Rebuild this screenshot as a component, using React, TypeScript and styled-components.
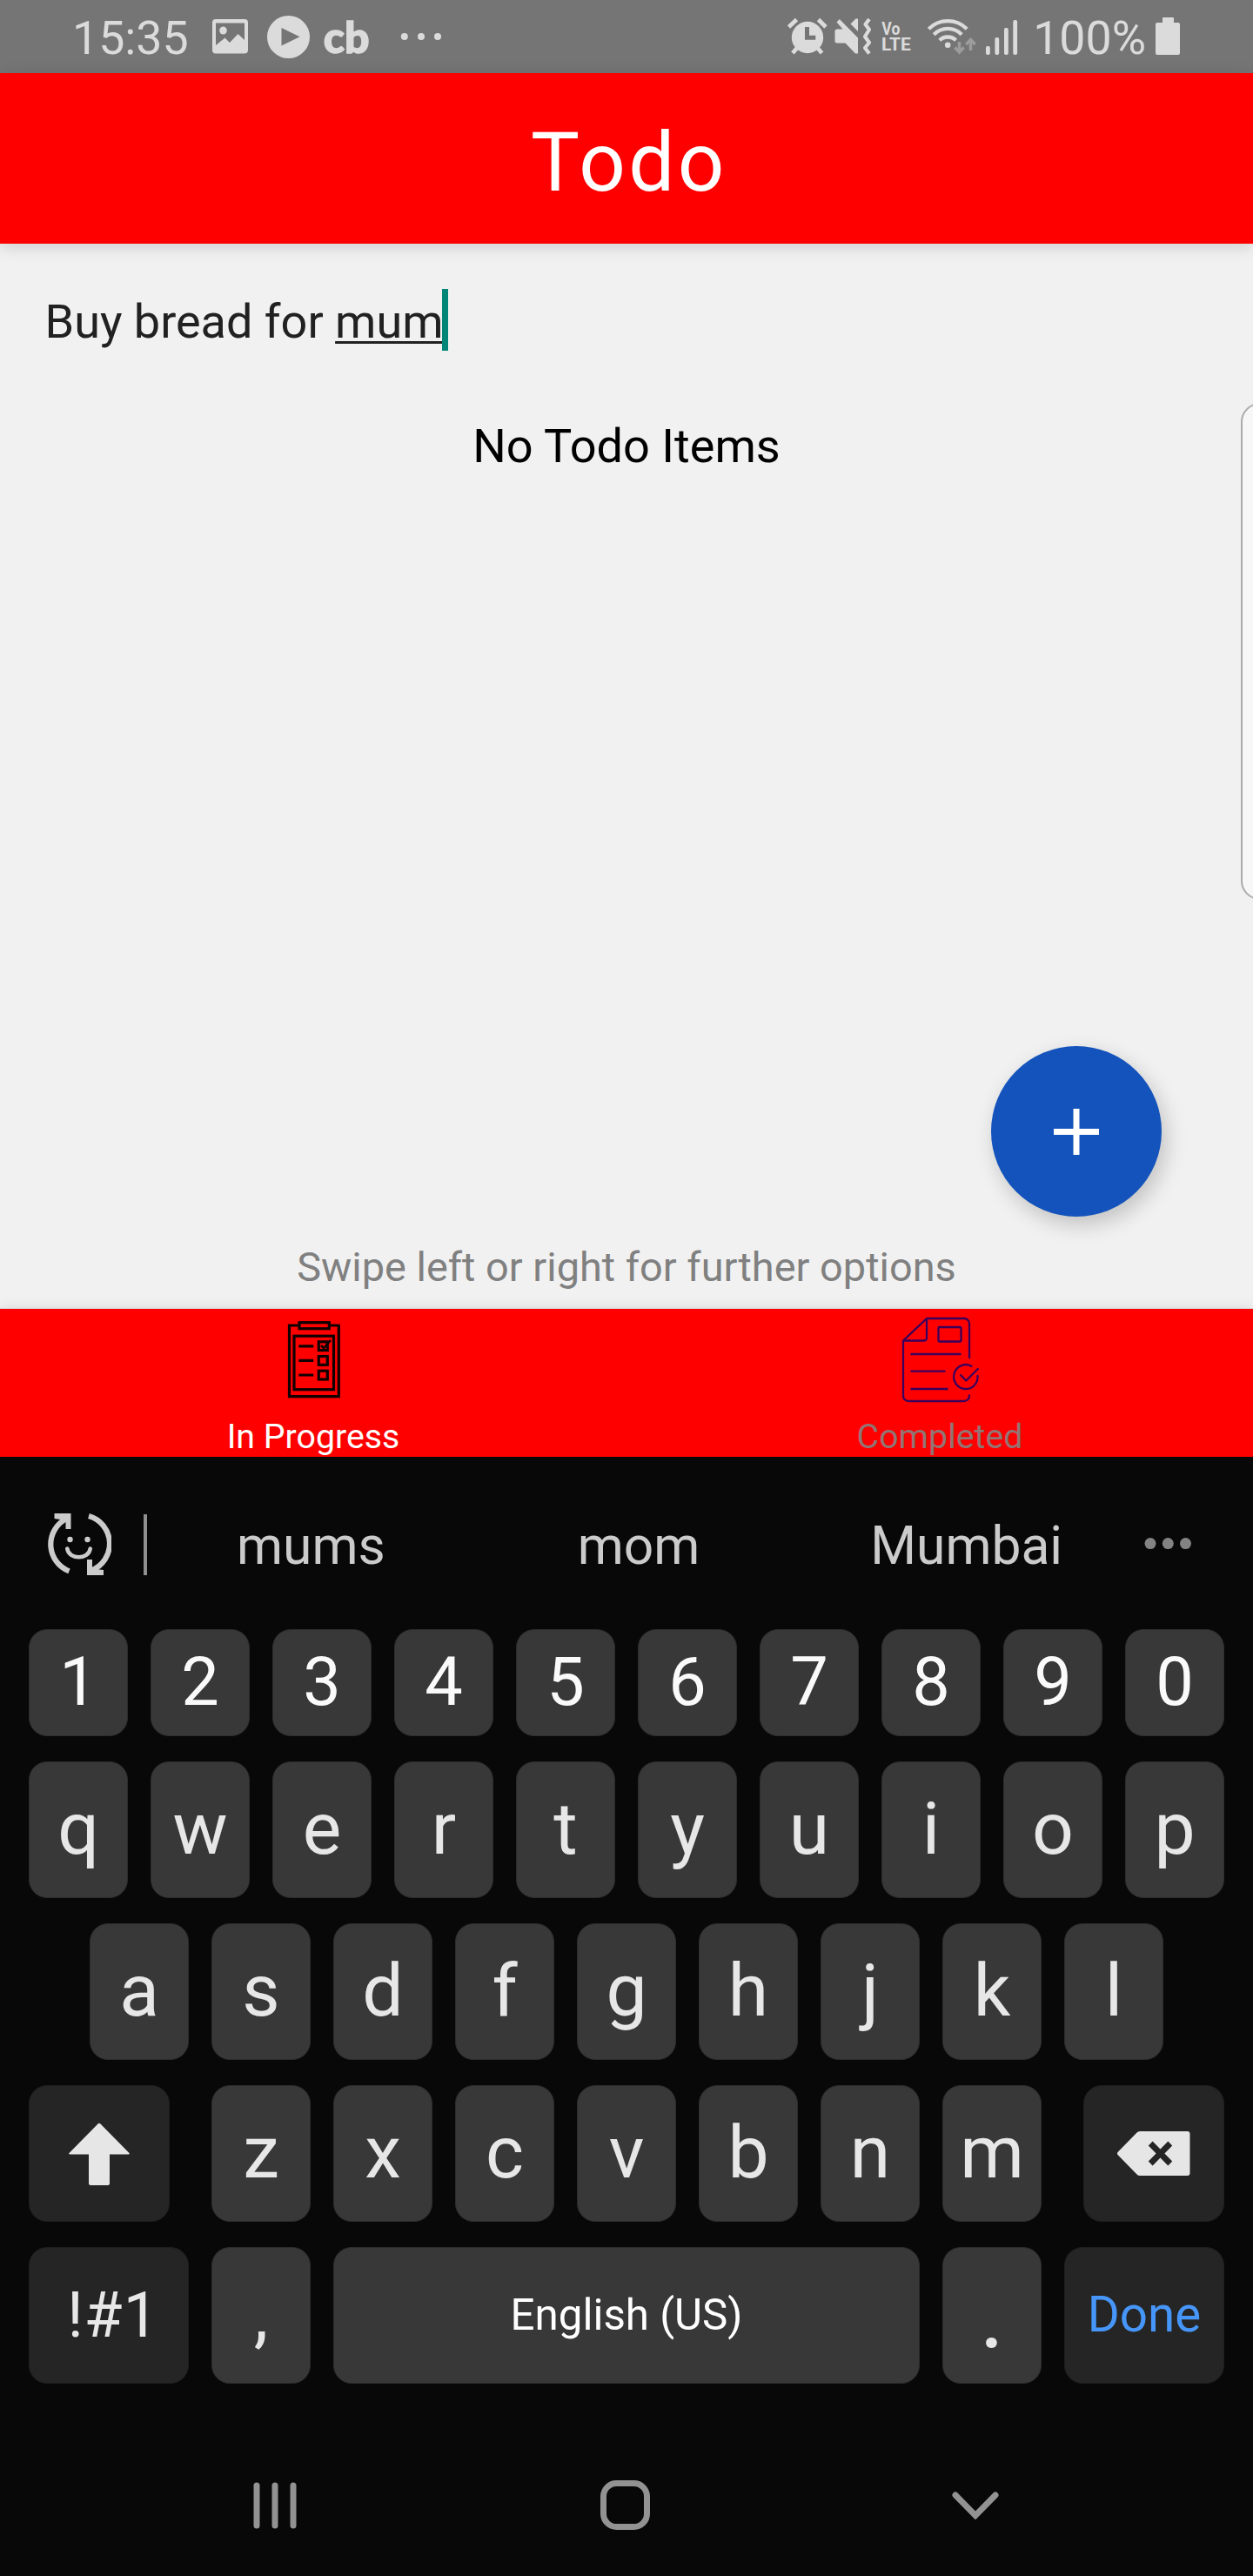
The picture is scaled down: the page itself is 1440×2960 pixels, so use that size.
import React from "react";
import styled, { createGlobalStyle } from "styled-components";

const GlobalStyle = createGlobalStyle`
  body {
    margin: 0;
    background: #080808;
  }
  * {
    box-sizing: border-box;
  }
`;

const Phone = styled.div`
  position: relative;
  display: flex;
  flex-direction: column;
  width: 1440px;
  height: 2960px;
  overflow: hidden;
  background: #f1f1f1;
  font-family: Roboto, "Liberation Sans", sans-serif;
`;

const Glyph = styled.svg`
  display: block;
  flex: none;
`;

/* ---------- Status bar ---------- */

const StatusBar = styled.div`
  display: flex;
  flex: none;
  justify-content: space-between;
  height: 84px;
  padding: 0 83px;
  background: #757575;
  color: #dbdbdb;
`;

const StatusGroup = styled.div`
  display: flex;
  align-items: center;
`;

const StatusText = styled.span<{ $gap?: number }>`
  margin-left: ${(p) => p.$gap ?? 0}px;
  padding-top: 3px;
  font-size: 53.7px;
  line-height: 81px;
  white-space: nowrap;
`;

const StatusIcon = styled(Glyph)<{ $gap?: number }>`
  margin-left: ${(p) => p.$gap ?? 0}px;
  fill: currentColor;
`;

const BrandMark = styled.span`
  width: 52px;
  margin-left: 15px;
  padding-top: 1px;
  font-family: Lato, sans-serif;
  font-weight: 900;
  font-size: 50px;
  line-height: 83px;
  -webkit-text-stroke: 1.4px currentColor;
`;

/* ---------- App ---------- */

const Header = styled.header`
  position: relative;
  z-index: 1;
  display: flex;
  flex: none;
  align-items: center;
  justify-content: center;
  height: 196px;
  padding: 10px 0 0 6px;
  background: #ff0000;
  box-shadow: 0 4px 18px rgba(0, 0, 0, 0.14);
`;

const Title = styled.h1`
  margin: 0;
  color: #ffffff;
  font-weight: 400;
  font-size: 94px;
  line-height: 112px;
  letter-spacing: 3.5px;
`;

const Content = styled.main`
  position: relative;
  display: flex;
  flex: none;
  flex-direction: column;
  height: 1223px;
  padding: 52px 0 17px;
`;

const InputRow = styled.div`
  display: flex;
  align-items: flex-start;
  height: 75px;
  padding-left: 51.5px;
  color: #212121;
  font-size: 54px;
  line-height: 75px;
  white-space: pre;
`;

const Composing = styled.span`
  text-decoration: underline;
  text-decoration-thickness: 3px;
  text-underline-offset: 4px;
  text-decoration-skip-ink: none;
`;

const Caret = styled.span`
  width: 7px;
  height: 71px;
  margin-left: -1.5px;
  background: #008577;
`;

const EmptyMessage = styled.p`
  margin: 68px 0 0;
  color: #000000;
  font-size: 54.1px;
  line-height: 75px;
  text-align: center;
`;

const Hint = styled.p`
  margin: auto 0 0;
  color: #808080;
  font-size: 46.9px;
  line-height: 61px;
  text-align: center;
`;

const AddButton = styled.button`
  position: absolute;
  right: 105px;
  bottom: 105px;
  display: flex;
  align-items: center;
  justify-content: center;
  width: 196px;
  height: 196px;
  padding: 0;
  border: 0;
  border-radius: 50%;
  background: #1353bb;
  box-shadow: 5px 9px 24px rgba(0, 0, 0, 0.2);
`;

const EdgePanel = styled.div`
  position: absolute;
  top: 463px;
  right: -30px;
  width: 44px;
  height: 571px;
  border: 2px solid #ababab;
  border-radius: 22px;
  background: #f7f7f7;
`;

const TabBar = styled.nav`
  position: relative;
  display: grid;
  flex: none;
  grid-template-columns: 1fr 1fr;
  height: 171px;
  border-top: 1px solid #d6d6d6;
  background: #ff0000;
  box-shadow: 0 0 14px rgba(0, 0, 0, 0.1);
`;

const Tab = styled.div<{ $active?: boolean }>`
  display: flex;
  flex-direction: column;
  align-items: center;
  color: ${(p) => (p.$active ? "#ffffff" : "#937473")};
  font-size: 39.3px;
  line-height: 46px;
`;

/* ---------- Keyboard ---------- */

const Keyboard = styled.section`
  position: relative;
  display: flex;
  flex: none;
  flex-direction: column;
  height: 1286px;
  background: #080808;
`;

const SuggestionBar = styled.div`
  display: flex;
  flex: none;
  align-items: center;
  height: 198px;
  padding: 3px 70px 0 53px;
`;

const Divider = styled.span`
  width: 4px;
  height: 70px;
  margin-left: 37px;
  background: #8f8f8f;
`;

const Suggestion = styled.span`
  flex: 1;
  padding-top: 4px;
  color: #cbcbcb;
  font-size: 60.5px;
  line-height: 72px;
  text-align: center;
`;

const MoreDots = styled(Glyph)`
  margin-left: 15px;
`;

const Keys = styled.div`
  display: flex;
  flex-direction: column;
  gap: 29px;
  padding: 0 33px;
`;

const KeyRow = styled.div<{ $height?: number; $inset?: number }>`
  display: flex;
  gap: 26px;
  height: ${(p) => p.$height ?? 157}px;
  padding: 0 ${(p) => p.$inset ?? 0}px;
`;

const LetterGroup = styled.div`
  display: flex;
  gap: 26px;
  margin: 0 22px;
`;

const Key = styled.div<{ $width?: number; $dark?: boolean; $size?: number; $color?: string; $lift?: number }>`
  display: flex;
  flex: ${(p) => (p.$width === 0 ? "1" : "none")};
  align-items: center;
  justify-content: center;
  width: ${(p) => p.$width ?? 114}px;
  padding-bottom: ${(p) => p.$lift ?? 0}px;
  border: 1px solid ${(p) => (p.$dark ? "#1e1e1e" : "#2c2c2c")};
  border-radius: 21px;
  background: ${(p) => (p.$dark ? "#252525" : "#383838")};
  color: ${(p) => p.$color ?? "#e7e7e7"};
  font-size: ${(p) => p.$size ?? 84}px;
  line-height: 1.17;
  white-space: nowrap;
`;

const SymbolsLabel = styled.span`
  padding-left: 10px;
  letter-spacing: 1px;
`;

const NavBar = styled.div`
  display: grid;
  grid-template-columns: repeat(3, 402.5px);
  justify-content: center;
  justify-items: center;
  align-items: center;
  height: 163px;
  margin-top: auto;
  padding-right: 3px;
`;

const tone = "#dbdbdb";

function ImageIcon() {
  return (
    <StatusIcon $gap={26} width="43" height="84" viewBox="243 0 43 84">
      <path
        fillRule="evenodd"
        d="M248 22H281a4 4 0 0 1 4 4V57.500a4 4 0 0 1-4 4H248a4 4 0 0 1-4-4V26a4 4 0 0 1 4-4ZM248 26.500V52L258.500 43.500L264 49L273.500 39L281 46V26.500Z"
      />
      <ellipse cx="256.500" cy="35" rx="4.300" ry="4.500" />
    </StatusIcon>
  );
}

function PlayIcon() {
  return (
    <StatusIcon $gap={20} width="51" height="84" viewBox="306 0 51 84">
      <path fillRule="evenodd" d="M331.500 18a24.500 24.500 0 1 1 0 49a24.500 24.500 0 1 1 0-49ZM323.500 32V52.500L344.500 42.300Z" />
    </StatusIcon>
  );
}

function MoreIcon() {
  return (
    <StatusIcon $gap={35} width="50" height="84" viewBox="459 0 50 84">
      <circle cx="464.800" cy="42" r="4" />
      <circle cx="484" cy="42" r="4" />
      <circle cx="503" cy="42" r="4" />
    </StatusIcon>
  );
}

function AlarmIcon() {
  return (
    <StatusIcon width="47" height="84" viewBox="904 0 47 84">
      <circle cx="928" cy="43" r="18.200" />
      <path
        d="M906.500 31L915.500 22.500M940.500 22.500L949 31M911 61L916 55M944.500 61L939.500 55"
        stroke={tone}
        strokeWidth="4.800"
      />
      <path d="M927.500 31V43.300H937.300" fill="none" stroke="#757575" strokeWidth="5" />
    </StatusIcon>
  );
}

function VibrateIcon() {
  return (
    <StatusIcon $gap={7} width="44" height="84" viewBox="958 0 44 84">
      <path d="M961.500 25.500L964.800 22L986 43.500V61.500H983L971.500 49.500H962a2.500 2.500 0 0 1-2.500-2.500V36a2.500 2.500 0 0 1 2.500-2.500H968.500Z" />
      <path d="M977.500 27.500L983.500 21.500H986V36Z" />
      <path
        d="M999 22L994.500 28L999 34L994 42L999 49L994 55L999 61.500"
        fill="none"
        stroke={tone}
        strokeWidth="4.200"
        strokeLinejoin="round"
      />
    </StatusIcon>
  );
}

function VolteIcon() {
  return (
    <StatusIcon $gap={10} width="36" height="84" viewBox="1012 0 36 84" fontWeight="700" fontSize="20.400">
      <text>
        <tspan x="1013.300" y="40" textLength="21" lengthAdjust="spacingAndGlyphs">
          Vo
        </tspan>
        <tspan x="1013" y="57.700" textLength="33.800" lengthAdjust="spacingAndGlyphs">
          LTE
        </tspan>
      </text>
    </StatusIcon>
  );
}

function WifiIcon() {
  return (
    <StatusIcon $gap={17} width="57" height="84" viewBox="1065 0 57 84">
      <circle cx="1089.200" cy="51.800" r="3.300" />
      <g fill="none" stroke={tone} strokeWidth="4.300">
        <path d="M1067.300 33.300A31 31 0 0 1 1111.200 33.300" />
        <path d="M1073.300 39.700A22 22 0 0 1 1105.200 39.700" />
        <path d="M1079.800 46.300A13.500 13.500 0 0 1 1098.600 46.300" />
      </g>
      <g fill="none" stroke="#9c9c9c" strokeWidth="3.400">
        <path d="M1102.500 48V59.500M1097.300 54.500L1102.500 60L1107.700 54.500" />
        <path d="M1115.500 58V46M1110.300 51L1115.500 45.500L1120.700 51" />
      </g>
    </StatusIcon>
  );
}

function SignalIcon() {
  return (
    <StatusIcon $gap={10} width="38" height="84" viewBox="1132 0 38 84">
      <rect x="1133" y="53" width="4.800" height="10" rx="2" />
      <rect x="1143.400" y="43" width="4.800" height="20" rx="2" />
      <rect x="1154" y="32" width="4.800" height="31" rx="2" />
      <rect x="1164.300" y="23" width="4.800" height="40" rx="2" />
    </StatusIcon>
  );
}

function BatteryIcon() {
  return (
    <StatusIcon $gap={10} width="30" height="84" viewBox="1327 0 30 84">
      <path d="M1336 21a1 1 0 0 1 1-1H1348a1 1 0 0 1 1 1V26H1354a2 2 0 0 1 2 2V61a2 2 0 0 1-2 2H1330a2 2 0 0 1-2-2V28a2 2 0 0 1 2-2H1336Z" />
    </StatusIcon>
  );
}

function ClipboardIcon() {
  return (
    <Glyph width="116" height="124" viewBox="302 1504 116 124" fill="none" stroke="#100000" strokeWidth="3.200">
      <path d="M343 1523H332.500V1604.700H389.300V1523H379" />
      <rect x="344" y="1519.700" width="34.300" height="7" />
      <rect x="338" y="1535.200" width="45.500" height="61.500" />
      <path d="M343.300 1546.800H360.300M343.300 1563.300H360.300M343.300 1580H360.300" />
      <rect x="366.300" y="1541.800" width="10" height="9.800" />
      <rect x="366.300" y="1558.500" width="10" height="9.800" />
      <rect x="366.300" y="1575.200" width="10" height="9.800" />
      <path d="M369 1546L372 1549L380 1540" strokeWidth="2.600" />
    </Glyph>
  );
}

function DocumentIcon() {
  return (
    <Glyph
      width="116"
      height="124"
      viewBox="1022 1504 116 124"
      fill="none"
      stroke="#3a005c"
      strokeWidth="2.300"
      strokeLinejoin="round"
    >
      <path d="M1114 1561V1521a6 6 0 0 0-6-6H1065L1038 1540.500V1604a6 6 0 0 0 6 6H1108a6 6 0 0 0 6-6V1602.500" />
      <path d="M1065 1515V1537.500a3 3 0 0 1-3 3H1038" />
      <rect x="1078.500" y="1525" width="26" height="16.500" rx="1" />
      <path d="M1046.500 1556H1104.500M1046.500 1575.700H1086.500M1046.500 1596H1089.500" />
      <path d="M1117.300 1570.300A13.700 14 0 1 0 1123.400 1580" />
      <path d="M1103.500 1579.500L1110.300 1586.500L1124.500 1572.300" />
    </Glyph>
  );
}

function EmojiSwapIcon() {
  return (
    <Glyph width="75" height="73" viewBox="54 1738 75 73" fill="none" stroke="#cbcbcb" strokeWidth="6.200">
      <path d="M80.500 1805.300A33 33 0 0 1 77.500 1745" />
      <path d="M103 1742A33 33 0 0 1 106 1804.500" />
      <path d="M63.500 1739H82.500V1757H76.500V1747L63.500 1745Z" fill="#cbcbcb" stroke="none" />
      <path d="M120 1810H101V1792H107V1802.500L120 1804Z" fill="#cbcbcb" stroke="none" />
      <circle cx="81.500" cy="1769" r="3.200" fill="#cbcbcb" stroke="none" />
      <circle cx="101.500" cy="1769" r="3.200" fill="#cbcbcb" stroke="none" />
      <path d="M78.300 1779.500C80 1792.500 103 1792.500 104.700 1779.500" strokeWidth="4.600" strokeLinecap="round" />
    </Glyph>
  );
}

function ShiftIcon() {
  return (
    <Glyph width="70" height="72" viewBox="0 0 70 72" fill="#e6e6e6">
      <path d="M33.500 1.500Q35 0 36.500 1.500L69.500 35Q70.500 36.500 68.500 36.500H47V70a2 2 0 0 1-2 2H25a2 2 0 0 1-2-2V36.500H1.500Q-.5 36.500 .5 35Z" />
    </Glyph>
  );
}

function BackspaceIcon() {
  return (
    <Glyph width="84" height="51" viewBox="0 0 84 51" fill="#e6e6e6">
      <path d="M26 0H80.500a3 3 0 0 1 3 3V48a3 3 0 0 1-3 3H26Q24 51 22.500 49.500L1 27.500Q-1 25.500 1 23.500L22.500 1.500Q24 0 26 0Z" />
      <path d="M38.200 14L60.800 37M60.800 14L38.200 37" stroke="#252525" strokeWidth="6.800" />
    </Glyph>
  );
}

export default function App() {
  return (
    <>
      <GlobalStyle />
      <Phone>
        <StatusBar>
          <StatusGroup>
            <StatusText>15:35</StatusText>
            <ImageIcon />
            <PlayIcon />
            <BrandMark>cb</BrandMark>
            <MoreIcon />
          </StatusGroup>
          <StatusGroup>
            <AlarmIcon />
            <VibrateIcon />
            <VolteIcon />
            <WifiIcon />
            <SignalIcon />
            <StatusText $gap={17}>100%</StatusText>
            <BatteryIcon />
          </StatusGroup>
        </StatusBar>

        <Header>
          <Title>Todo</Title>
        </Header>

        <Content>
          <InputRow>
            <span>
              Buy bread for <Composing>mum</Composing>
            </span>
            <Caret />
          </InputRow>
          <EmptyMessage>No Todo Items</EmptyMessage>
          <Hint>Swipe left or right for further options</Hint>
          <AddButton aria-label="Add">
            <Glyph width="52" height="53" viewBox="0 0 52 53" fill="#ffffff">
              <path d="M22.500 0H29.500V23H52V30H29.500V53H22.500V30H0V23H22.500Z" />
            </Glyph>
          </AddButton>
        </Content>

        <EdgePanel />

        <TabBar>
          <Tab $active>
            <ClipboardIcon />
            In Progress
          </Tab>
          <Tab>
            <DocumentIcon />
            Completed
          </Tab>
        </TabBar>

        <Keyboard>
          <SuggestionBar>
            <EmojiSwapIcon />
            <Divider />
            <Suggestion>mums</Suggestion>
            <Suggestion>mom</Suggestion>
            <Suggestion>Mumbai</Suggestion>
            <MoreDots width="56" height="15" viewBox="0 0 56 15" fill="#838383">
              <circle cx="8" cy="6.600" r="6.500" />
              <circle cx="28.300" cy="6.600" r="6.500" />
              <circle cx="48.500" cy="6.600" r="6.500" />
            </MoreDots>
          </SuggestionBar>

          <Keys>
            <KeyRow $height={123}>
              {[..."1234567890"].map((k) => (
                <Key key={k} $size={77.5} $color="#fafafa">
                  {k}
                </Key>
              ))}
            </KeyRow>
            <KeyRow>
              {[..."qwertyuiop"].map((k) => (
                <Key key={k}>{k}</Key>
              ))}
            </KeyRow>
            <KeyRow $inset={70}>
              {[..."asdfghjkl"].map((k) => (
                <Key key={k}>{k}</Key>
              ))}
            </KeyRow>
            <KeyRow>
              <Key $width={162} $dark>
                <ShiftIcon />
              </Key>
              <LetterGroup>
                {[..."zxcvbnm"].map((k) => (
                  <Key key={k}>{k}</Key>
                ))}
              </LetterGroup>
              <Key $width={162} $dark>
                <BackspaceIcon />
              </Key>
            </KeyRow>
            <KeyRow>
              <Key $width={184} $dark $size={71.5}>
                <SymbolsLabel>!#1</SymbolsLabel>
              </Key>
              <Key>,</Key>
              <Key $width={0} $size={49.3} $color="#ffffff">
                English (US)
              </Key>
              <Key $size={112} $lift={4}>
                .
              </Key>
              <Key $width={184} $dark $size={56.5} $color="#4696fa">
                Done
              </Key>
            </KeyRow>
          </Keys>

          <NavBar>
            <Glyph width="50" height="54" viewBox="0 0 50 54" fill="#929292">
              <rect x="0.500" y="0.500" width="7" height="53" rx="3.500" />
              <rect x="21.500" y="0.500" width="7" height="53" rx="3.500" />
              <rect x="42.500" y="0.500" width="7" height="53" rx="3.500" />
            </Glyph>
            <Glyph width="57" height="57" viewBox="0 0 57 57" fill="none" stroke="#929292" strokeWidth="7">
              <rect x="3.500" y="3.500" width="50" height="50" rx="15" />
            </Glyph>
            <Glyph width="54" height="32" viewBox="0 0 54 32" fill="none" stroke="#929292" strokeWidth="7" strokeLinecap="round">
              <path d="M4 4L27 27.500L50 4" />
            </Glyph>
          </NavBar>
        </Keyboard>
      </Phone>
    </>
  );
}
